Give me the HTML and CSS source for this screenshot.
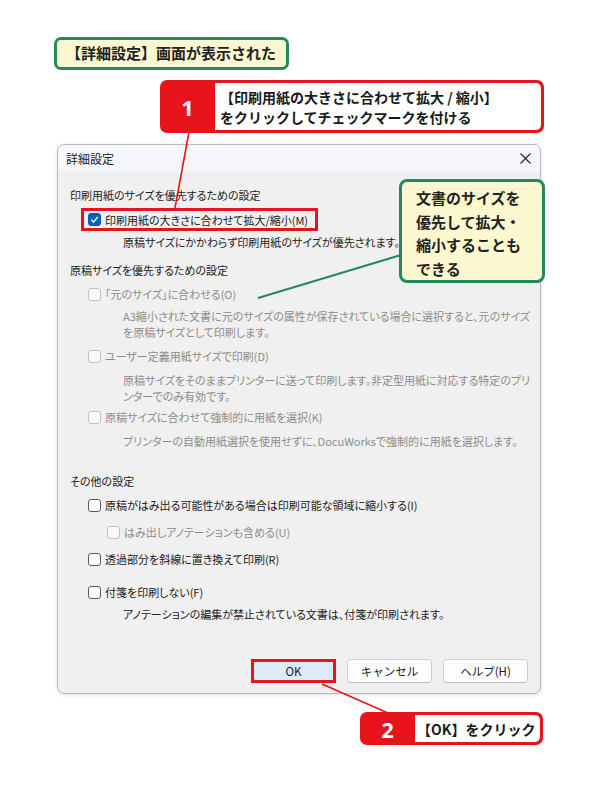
FILE: index.html
```html
<!DOCTYPE html>
<html lang="ja">
<head>
    <meta charset="UTF-8">
    <meta name="viewport" content="width=device-width, initial-scale=1.0">
    <title>詳細設定</title>
    <link rel="stylesheet" href="styles.css">
</head>
<body>
    <div class="page">
        <div class="caption">【詳細設定】画面が表示された</div>

        <div class="step step-one">
            <div class="step-num">1</div>
            <div class="step-text">【印刷用紙の大きさに合わせて拡大 / 縮小】<br>をクリックしてチェックマークを付ける</div>
        </div>

        <div class="dialog">
            <div class="titlebar">
                <span>詳細設定</span>
                <svg class="close" width="11" height="11" viewBox="0 0 11 11">
                    <path d="M0.5 0.5 L10.5 10.5 M10.5 0.5 L0.5 10.5" stroke="#222" stroke-width="1.1" fill="none"/>
                </svg>
            </div>

            <div class="content">
                <div class="section">印刷用紙のサイズを優先するための設定</div>
                <div class="option highlight">
                    <span class="box checked">
                        <svg width="9" height="9" viewBox="0 0 9 9"><path d="M1.2 4.8 L3.5 7 L7.8 2" stroke="#fff" stroke-width="1.3" fill="none"/></svg>
                    </span>
                    印刷用紙の大きさに合わせて拡大/縮小(M)
                </div>
                <div class="desc">原稿サイズにかかわらず印刷用紙のサイズが優先されます。</div>

                <div class="section">原稿サイズを優先するための設定</div>
                <div class="option disabled"><span class="box"></span>「元のサイズ」に合わせる(O)</div>
                <div class="desc disabled">A3縮小された文書に元のサイズの属性が保存されている場合に選択すると、元のサイズ<br>を原稿サイズとして印刷します。</div>
                <div class="option disabled"><span class="box"></span>ユーザー定義用紙サイズで印刷(D)</div>
                <div class="desc disabled lower">原稿サイズをそのままプリンターに送って印刷します。非定型用紙に対応する特定のプリ<br>ンターでのみ有効です。</div>
                <div class="option disabled tight"><span class="box"></span>原稿サイズに合わせて強制的に用紙を選択(K)</div>
                <div class="desc disabled lower">プリンターの自動用紙選択を使用せずに、DocuWorksで強制的に用紙を選択します。</div>

                <div class="section other">その他の設定</div>
                <div class="option"><span class="box"></span>原稿がはみ出る可能性がある場合は印刷可能な領域に縮小する(I)</div>
                <div class="option sub disabled"><span class="box"></span>はみ出しアノテーションも含める(U)</div>
                <div class="option"><span class="box"></span>透過部分を斜線に置き換えて印刷(R)</div>
                <div class="option spaced"><span class="box"></span>付箋を印刷しない(F)</div>
                <div class="desc">アノテーションの編集が禁止されている文書は、付箋が印刷されます。</div>
            </div>

            <div class="footer">
                <button class="btn btn-ok">OK</button>
                <button class="btn">キャンセル</button>
                <button class="btn">ヘルプ(H)</button>
            </div>
        </div>

        <div class="step step-two">
            <div class="step-num">2</div>
            <div class="step-text">【OK】をクリック</div>
        </div>

        <!-- leader lines from the callouts -->
        <svg class="leaders" width="600" height="800" viewBox="0 0 600 800">
            <line x1="189" y1="132" x2="175" y2="208" stroke="#e8141c" stroke-width="1.6"/>
            <line x1="322" y1="684" x2="388" y2="713" stroke="#e8141c" stroke-width="1.6"/>
            <line x1="258" y1="298" x2="401" y2="255" stroke="#23895f" stroke-width="2"/>
        </svg>

        <div class="note">文書のサイズを<br>優先して拡大・<br>縮小することも<br>できる</div>
    </div>
</body>
</html>
```

FILE: styles.css
```css
body {
    margin: 0;
    background: #fff;
    font-family: "Noto Sans CJK JP", "Noto Sans", sans-serif;
    color: #1b1b1b;
}
.page {
    position: relative;
    width: 600px;
    height: 800px;
    overflow: hidden;
    padding-top: 37px;
    box-sizing: border-box;
}

/* callouts */
.caption {
    width: fit-content;
    margin-left: 54px;
    height: 33px;
    box-sizing: border-box;
    padding: 0 10px 0 9px;
    border: 3px solid #23895f;
    border-radius: 7px;
    background: #fdf8cf;
    font-size: 15px;
    font-weight: 700;
    line-height: 26px;
    color: #222;
}
.step {
    display: flex;
    border-radius: 7px;
    overflow: hidden;
    background: #e8141c;
    position: relative;
    z-index: 2;
}
.step-one {
    margin: 10px 0 0 160px;
    width: 384px;
    height: 53px;
}
.step-two {
    margin: 18px 0 0 360px;
    width: 183px;
    height: 33px;
}
.step-num {
    width: 55px;
    display: flex;
    align-items: center;
    justify-content: center;
    color: #fff;
    font-family: "Noto Sans", sans-serif;
    font-weight: 700;
    font-size: 22px;
}
.step-text {
    flex: 1;
    margin: 3px 3px 3px 0;
    border-radius: 0 5px 5px 0;
    background: #fff;
    padding-left: 5px;
    font-size: 14px;
    font-weight: 700;
    line-height: 20px;
    color: #1a1a1a;
    display: flex;
    align-items: center;
}
.step-two .step-text {
    padding-left: 2px;
}
.note {
    position: absolute;
    left: 399px;
    top: 179px;
    width: 146px;
    height: 104px;
    box-sizing: border-box;
    padding: 4px 0 0 14px;
    border: 3px solid #23895f;
    border-radius: 8px;
    background: #fdf8cf;
    font-size: 15px;
    font-weight: 700;
    line-height: 23.5px;
    color: #222;
    z-index: 3;
}
.leaders {
    position: absolute;
    left: 0;
    top: 0;
    z-index: 1;
    pointer-events: none;
}

/* dialog */
.dialog {
    margin: 11px 0 0 57px;
    width: 484px;
    height: 550px;
    box-sizing: border-box;
    border: 1px solid #b9b9b9;
    border-radius: 7px;
    background: #f0f0f0;
    box-shadow: 0 1px 4px rgba(0,0,0,0.12);
    display: flex;
    flex-direction: column;
    overflow: hidden;
    font-size: 11px;
    font-feature-settings: "palt";
}
.titlebar {
    height: 27px;
    flex-shrink: 0;
    background: #f4f6fa;
    display: flex;
    align-items: center;
    justify-content: space-between;
    padding: 0 9px 0 8px;
    font-size: 12px;
}
.content {
    flex: 1;
    padding: 15px 12px 0;
}
.section {
    line-height: 16px;
    margin-top: 12px;
}
.section:first-child {
    margin-top: 0;
}
.section.other {
    margin-top: 24px;
}
.option {
    display: flex;
    align-items: center;
    gap: 4px;
    height: 22px;
    margin-top: 5px;
    padding-left: 18px;
    white-space: nowrap;
}
.option.tight {
    margin-top: 2px;
}
.option.sub {
    padding-left: 37px;
}
.option.spaced {
    margin-top: 11px;
}
.option.highlight {
    width: fit-content;
    height: 23px;
    box-sizing: border-box;
    margin-left: 11px;
    padding: 0 7px 0 4px;
    border: 3px solid #e8141c;
}
.desc {
    line-height: 16px;
    margin-top: 3px;
    padding-left: 53px;
    color: #222;
    white-space: nowrap;
}
.desc.lower {
    margin-top: 5px;
}
.disabled {
    color: #8c8c8c;
}
.box {
    width: 13px;
    height: 13px;
    box-sizing: border-box;
    border: 1px solid #5a5a5a;
    border-radius: 3px;
    background: #fff;
    display: flex;
    align-items: center;
    justify-content: center;
}
.box.checked {
    background: #005fb8;
    border-color: #005fb8;
}
.disabled .box {
    border-color: #c2c2c2;
    background: #f9f9f9;
}

.footer {
    display: flex;
    justify-content: flex-end;
    gap: 11px;
    padding: 0 12px 10px;
}
.btn {
    width: 85px;
    height: 24px;
    box-sizing: border-box;
    border: 1px solid #d0d0d0;
    border-bottom-color: #bdbdbd;
    border-radius: 4px;
    background: #fdfdfd;
    font-family: inherit;
    font-size: 11.5px;
    color: #1b1b1b;
    padding: 0;
}
.btn-ok {
    border: 3px solid #e8141c;
    border-radius: 0;
    background: #dcebf8;
}
```
